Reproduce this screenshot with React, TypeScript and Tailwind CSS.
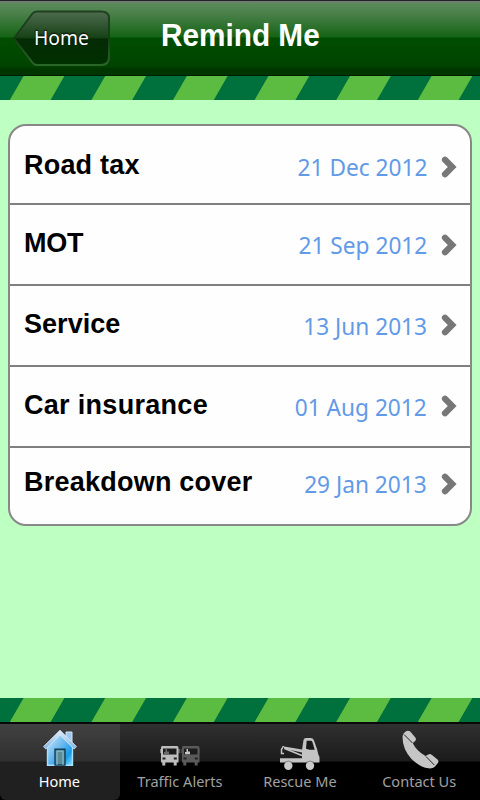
import { useState } from "react"
import clsx from "clsx"

interface Reminder {
  label: string
  date: string
  row: string
  tracking: string
}

const reminders: Reminder[] = [
  { label: "Road tax", date: "21 Dec 2012", row: "h-[77px] pt-[5px]", tracking: "tracking-[0.2px]" },
  { label: "MOT", date: "21 Sep 2012", row: "h-[81px] border-t-2 pt-px", tracking: "tracking-[-0.3px]" },
  { label: "Service", date: "13 Jun 2013", row: "h-[81px] border-t-2", tracking: "tracking-[0.05px]" },
  { label: "Car insurance", date: "01 Aug 2012", row: "h-[81px] border-t-2", tracking: "tracking-[0.3px]" },
  { label: "Breakdown cover", date: "29 Jan 2013", row: "h-[78px] border-t-2 pb-1", tracking: "tracking-[0.23px]" },
]

const stripes = [-71.7, 9.8, 91.4, 173, 254.6, 336.2, 417.8]

function HazardStripe() {
  return (
    <svg viewBox="0 0 480 24" className="block h-6 w-full shrink-0 bg-[#00703c]">
      {stripes.map((x) => (
        <polygon key={x} points={`${x},24 ${x + 13.8},0 ${x + 54.6},0 ${x + 40.8},24`} fill="#5cbc42" />
      ))}
    </svg>
  )
}

function Chevron() {
  return (
    <svg viewBox="0 0 16 22" className="mb-px h-[22px] w-4 shrink-0">
      <path d="M4 3.800 L11.200 11 L4 18.200" fill="none" stroke="#777" strokeWidth="6.200" strokeLinecap="round" strokeLinejoin="miter" />
    </svg>
  )
}

function HomeIcon() {
  return (
    <svg viewBox="0 0 36 38" className="h-[38px] w-9">
      <defs>
        <linearGradient id="wall" x1="0" y1="0" x2="1" y2="1">
          <stop offset="0" stopColor="#d4ebfb" />
          <stop offset="0.5" stopColor="#5fb4ee" />
          <stop offset="0.75" stopColor="#149cea" />
          <stop offset="1" stopColor="#8fe0ff" />
        </linearGradient>
        <linearGradient id="roof" x1="0" y1="0" x2="0" y2="1">
          <stop offset="0" stopColor="#e2eefb" />
          <stop offset="1" stopColor="#7fb4e4" />
        </linearGradient>
      </defs>
      <path d="M24 3h6v12h-6z" fill="#9cc6ef" stroke="#d4e8f8" strokeWidth="1" />
      <path d="M5.500 18 L18 5 L30.500 18 V36.300 H5.500z" fill="url(#wall)" stroke="#a6e2ff" strokeWidth="1.400" />
      <path d="M18 1.200 L34.500 17.600 L32.200 20 L18 6.200 L3.800 20 L1.500 17.600z" fill="url(#roof)" stroke="#d5e6f5" strokeWidth="0.800" />
      <path d="M13 36V20.200h10V36z" fill="#5c8c96" stroke="#153f58" strokeWidth="1.400" />
      <path d="M15 36V22.200h6V36" fill="none" stroke="#8ecbe0" strokeWidth="0.900" />
    </svg>
  )
}

function Bus({ x, fill, accent }: { x: number; fill: string; accent: string }) {
  return (
    <g transform={`translate(${x} 0)`}>
      <path d="M2 0h15q1.500 0 1.500 2v14.500h-1.800v3h-3v-3H5.300v3h-3v-3H1V2q0-2 1-2z" fill={fill} />
      <path d="M0.300 3v4M19 3v4" stroke={fill} strokeWidth="0.800" />
      <path d="M3 2.500h13.500v6H3z" fill="#1c1c1c" />
      <path d="M4 8.300 V6 h1.500 V3 h1.500 V5.500 h2 V8.300z" fill={accent} />
      <path d="M2.500 11.500h3v2h-3zM13.800 11.500h3v2h-3z" fill="#222" />
    </g>
  )
}

function BusIcon() {
  return (
    <svg viewBox="0 0 40 20" className="mt-[17px] h-5 w-10">
      <Bus x={0} fill="#bdbdbd" accent="#6a6a6a" />
      <Bus x={21} fill="#5a5a5a" accent="#c6c6c6" />
    </svg>
  )
}

function TruckIcon() {
  return (
    <svg viewBox="0 0 40 34" className="mt-[9px] h-[34px] w-10">
      <path d="M0 20.300h22V12l1.500-10q.5-2 2.500-2h4.500q2.500 0 3.300 2l3.200 9 1.500 6q1 1 1 3v4.500H0z" fill="#c4c4c4" />
      <path d="M26.700 2.800h4q1.300 0 1.700 1.200l2.300 7.800h-5.200l-3.500-1z" fill="#191919" />
      <path d="M4 8.500 L22 11.500 V14.500 L4 10.800z" fill="#c4c4c4" />
      <path d="M3.500 8 L1.500 11.500 V15.500 H4 M4.500 10.500 L22 17.500" fill="none" stroke="#c4c4c4" strokeWidth="1.500" />
      <circle cx="8.300" cy="27.800" r="4.200" fill="#cbcbcb" />
      <circle cx="30" cy="27.800" r="4.200" fill="#cbcbcb" />
      <path d="M4 24.500q4.500-3 8.600 0M25.700 24.500q4.500-3 8.600 0" fill="none" stroke="#666" strokeWidth="0.700" />
    </svg>
  )
}

function PhoneIcon() {
  return (
    <svg viewBox="0 0 37 39" className="mt-px h-[39px] w-[37px]">
      <path
        d="M4.500 1 Q6.500 0 8.500 1.800 L13.500 7.800 Q14.800 9.800 12.500 11.500 L10.800 13.300 Q14.500 21 23.500 26 L26.300 24.500 Q28 23.500 30 25 L35.500 29.500 Q37.300 31.200 35.700 33.200 L32.500 37 Q30.500 38.700 26.500 38.300 Q18.500 37.500 9.500 29 Q0 18.500 0.600 6 Q1 3.500 2.500 2.500z"
        fill="#c6c6c6"
      />
      <path d="M2 4.500 L10.500 13 M24 26.500 L32.300 35" stroke="#252525" strokeWidth="1" />
    </svg>
  )
}

const tabs = [
  { name: "Home", Icon: HomeIcon },
  { name: "Traffic Alerts", Icon: BusIcon },
  { name: "Rescue Me", Icon: TruckIcon },
  { name: "Contact Us", Icon: PhoneIcon },
]

export default function App() {
  const [active, setActive] = useState("Home")

  return (
    <div className="flex h-[800px] w-[480px] flex-col overflow-hidden bg-[#beffc2] font-['Noto_Sans',sans-serif]">
      <header className="relative flex h-[76px] shrink-0 items-start justify-center border-t border-b border-t-[#22222a] border-b-[#021c02] bg-[linear-gradient(#777b77_0px,#598b59_3px,#4b814b_12px,#156415_36px,#004e00_37px,#004300_66px,#003600_67px,#003500_74px)]">
        <button className="absolute top-[8px] left-[12px] h-[58px] w-[99px]">
          <svg viewBox="0 0 99 58" className="absolute inset-0 h-full w-full">
            <defs>
              <linearGradient id="back" x1="0" y1="0" x2="0" y2="1">
                <stop offset="0" stopColor="#4e6b4e" />
                <stop offset="0.49" stopColor="#164216" />
                <stop offset="0.51" stopColor="#052b05" />
                <stop offset="1" stopColor="#003000" />
              </linearGradient>
              <linearGradient id="backEdge" x1="0" y1="0" x2="0" y2="1">
                <stop offset="0" stopColor="#214021" />
                <stop offset="0.5" stopColor="#173d17" />
                <stop offset="1" stopColor="#2c652c" />
              </linearGradient>
            </defs>
            <path
              d="M25 2.500 H89 Q97 2.500 97 9 V48 Q97 56 89 56 H25 Q22 56 20 53 L2 29.500 L20 5 Q22 2.500 25 2.500z"
              fill="url(#back)"
              stroke="url(#backEdge)"
              strokeWidth="2"
            />
          </svg>
          <span className="absolute top-[14px] left-[22px] origin-left scale-x-[0.94] text-[20.5px] leading-7 text-white [text-shadow:0_-1px_2px_#000]">Home</span>
        </button>
        <h1 className="mt-4 origin-center scale-x-[0.93] font-['Liberation_Sans',sans-serif] text-[32px] leading-9 font-bold text-white">Remind Me</h1>
      </header>
      <HazardStripe />

      <main className="flex-1 px-2 pt-6">
        <ul className="overflow-hidden rounded-[18px] border-2 border-[#888] bg-[#fefefe]">
          {reminders.map((item) => (
            <li key={item.label} className={clsx("flex items-center border-[#808080] pr-[13px] pl-[14px]", item.row)}>
              <span className={clsx("mb-1 flex-1 font-['Liberation_Sans',sans-serif] text-[27px] leading-8 font-bold text-black", item.tracking)}>{item.label}</span>
              <span className="mr-[14px] origin-right scale-x-[0.945] text-2xl leading-8 text-[#629ae8]">{item.date}</span>
              <Chevron />
            </li>
          ))}
        </ul>
      </main>

      <HazardStripe />
      <nav className="grid h-[78px] shrink-0 grid-cols-4 border-t-2 border-[#090909] bg-[linear-gradient(#303030_0px,#1b1b1b_37px,#000_38px)]">
        {tabs.map(({ name, Icon }) => (
          <button
            key={name}
            onClick={() => setActive(name)}
            className={clsx(
              "flex flex-col items-center rounded-b-md pt-[5px]",
              active === name ? "bg-[linear-gradient(#414141_0px,#303030_37px,#202020_38px)] text-white" : "text-[#a0a0a0]"
            )}
          >
            <span className="flex h-[42px] items-start">
              <Icon />
            </span>
            <span className="-ml-px scale-x-[0.97] text-[15px] leading-5 whitespace-nowrap">{name}</span>
          </button>
        ))}
      </nav>
    </div>
  )
}
